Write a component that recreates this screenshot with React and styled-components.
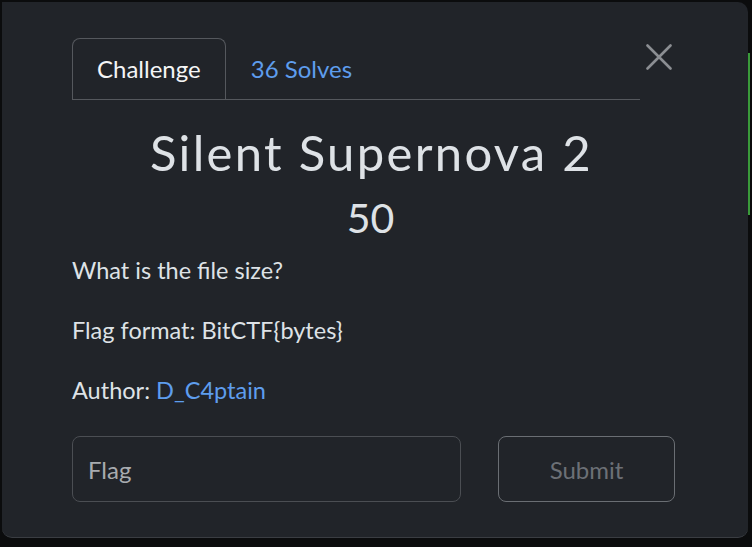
import React from 'react';
import styled, { createGlobalStyle } from 'styled-components';

const Global = createGlobalStyle`
  html, body {
    margin: 0;
    background: #0b0c0d;
    font-family: 'Lato', 'Liberation Sans', sans-serif;
  }
`;

const Page = styled.div`
  display: flex;
  align-items: flex-start;
  padding: 2px 0 0 2px;
  height: 545px;
  box-sizing: border-box;
`;

const Modal = styled.div`
  position: relative;
  width: 746px;
  height: 536px;
  box-sizing: border-box;
  background: #212429;
  border-bottom: 1px solid #3a3d42;
  border-radius: 0 10px 10px 10px;
  padding: 36px 77px 0 70px;
  color: #dee2e6;
`;

const Edge = styled.div`
  width: 4px;
  height: 100%;
  display: flex;
  flex-direction: column;
  padding-top: 51px;
  box-sizing: border-box;
`;

const EdgeBar = styled.div`
  width: 2px;
  height: 162px;
  background: #3a9a3a;
`;

const TabRow = styled.div`
  display: flex;
  width: 568px;
  border-bottom: 1px solid #55585d;
`;

const Tab = styled.div`
  height: 61px;
  box-sizing: border-box;
  display: flex;
  align-items: center;
  padding: 0 24px 2px;
  font-size: 24px;
  color: ${p => (p.active ? '#f4f5f6' : '#5e9ded')};
  border: 1px solid ${p => (p.active ? '#55585d' : 'transparent')};
  border-bottom: none;
  border-radius: 8px 8px 0 0;
  margin-bottom: ${p => (p.active ? '-1px' : '0')};
  background: ${p => (p.active ? '#212429' : 'transparent')};
`;

const Close = styled.button`
  position: absolute;
  top: 40px;
  right: 74px;
  width: 30px;
  height: 30px;
  padding: 0;
  border: none;
  background: none;
  display: flex;
  align-items: center;
  justify-content: center;
`;

const Title = styled.h1`
  margin: 22px 0 0;
  text-align: center;
  font-weight: 400;
  font-size: 49px;
  letter-spacing: 2.3px;
  line-height: 60px;
`;

const Points = styled.div`
  text-align: center;
  font-size: 41px;
  line-height: 50px;
  margin: 11px 0 0 -2px;
`;

const Text = styled.p`
  margin: 0 0 32px;
  font-size: 23.5px;
  line-height: 28px;
  color: #dee2e6;
`;

const Link = styled.a`
  color: #5e9ded;
  text-decoration: none;
`;

const Description = styled.div`
  margin-top: 13px;
`;

const FormRow = styled.div`
  display: flex;
  gap: 37px;
  margin-top: 27px;
  width: 603px;
`;

const FlagInput = styled.input`
  flex: 1;
  height: 66px;
  box-sizing: border-box;
  border: 1px solid #4b4e53;
  border-radius: 8px;
  background: #212429;
  padding: 0 15px;
  font-family: inherit;
  font-size: 24px;
  color: #dee2e6;
  outline: none;
  &::placeholder {
    color: #a8abaf;
  }
`;

const Submit = styled.button`
  width: 177px;
  height: 66px;
  border: 1px solid #6a6e73;
  border-radius: 8px;
  background: transparent;
  font-family: inherit;
  font-size: 24px;
  color: #6c7076;
`;

export default function App() {
  return (
    <Page>
      <Global />
      <Modal>
        <TabRow>
          <Tab active>Challenge</Tab>
          <Tab>36 Solves</Tab>
        </TabRow>
        <Close aria-label="Close">
          <svg width="26" height="26" viewBox="0 0 26 26">
            <path d="M1.5 1.5 L24.5 24.5 M24.5 1.5 L1.5 24.5" stroke="#8b8e92" strokeWidth="2.6" strokeLinecap="round" />
          </svg>
        </Close>
        <Title>Silent Supernova 2</Title>
        <Points>50</Points>
        <Description>
          <Text>What is the file size?</Text>
          <Text>Flag format: BitCTF{'{'}bytes{'}'}</Text>
          <Text>Author: <Link href="#">D_C4ptain</Link></Text>
        </Description>
        <FormRow>
          <FlagInput placeholder="Flag" />
          <Submit>Submit</Submit>
        </FormRow>
      </Modal>
      <Edge>
        <EdgeBar />
      </Edge>
    </Page>
  );
}
